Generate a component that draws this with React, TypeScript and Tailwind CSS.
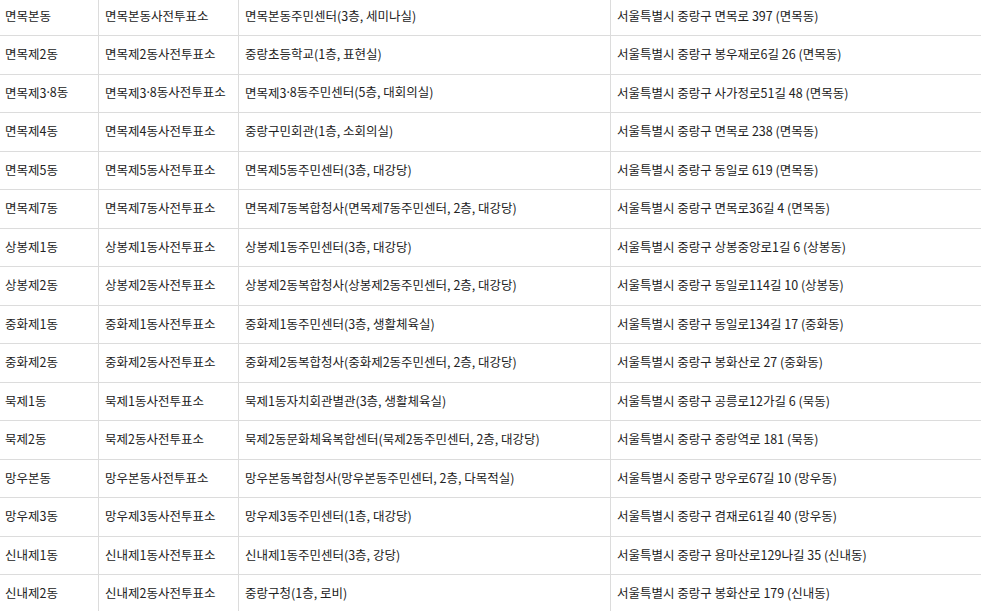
const ROWS: [string, string, string, string][] = [
  ["면목본동", "면목본동사전투표소", "면목본동주민센터(3층, 세미나실)", "서울특별시 중랑구 면목로 397 (면목동)"],
  ["면목제2동", "면목제2동사전투표소", "중랑초등학교(1층, 표현실)", "서울특별시 중랑구 봉우재로6길 26 (면목동)"],
  ["면목제3·8동", "면목제3·8동사전투표소", "면목제3·8동주민센터(5층, 대회의실)", "서울특별시 중랑구 사가정로51길 48 (면목동)"],
  ["면목제4동", "면목제4동사전투표소", "중랑구민회관(1층, 소회의실)", "서울특별시 중랑구 면목로 238 (면목동)"],
  ["면목제5동", "면목제5동사전투표소", "면목제5동주민센터(3층, 대강당)", "서울특별시 중랑구 동일로 619 (면목동)"],
  ["면목제7동", "면목제7동사전투표소", "면목제7동복합청사(면목제7동주민센터, 2층, 대강당)", "서울특별시 중랑구 면목로36길 4 (면목동)"],
  ["상봉제1동", "상봉제1동사전투표소", "상봉제1동주민센터(3층, 대강당)", "서울특별시 중랑구 상봉중앙로1길 6 (상봉동)"],
  ["상봉제2동", "상봉제2동사전투표소", "상봉제2동복합청사(상봉제2동주민센터, 2층, 대강당)", "서울특별시 중랑구 동일로114길 10 (상봉동)"],
  ["중화제1동", "중화제1동사전투표소", "중화제1동주민센터(3층, 생활체육실)", "서울특별시 중랑구 동일로134길 17 (중화동)"],
  ["중화제2동", "중화제2동사전투표소", "중화제2동복합청사(중화제2동주민센터, 2층, 대강당)", "서울특별시 중랑구 봉화산로 27 (중화동)"],
  ["묵제1동", "묵제1동사전투표소", "묵제1동자치회관별관(3층, 생활체육실)", "서울특별시 중랑구 공릉로12가길 6 (묵동)"],
  ["묵제2동", "묵제2동사전투표소", "묵제2동문화체육복합센터(묵제2동주민센터, 2층, 대강당)", "서울특별시 중랑구 중랑역로 181 (묵동)"],
  ["망우본동", "망우본동사전투표소", "망우본동복합청사(망우본동주민센터, 2층, 다목적실)", "서울특별시 중랑구 망우로67길 10 (망우동)"],
  ["망우제3동", "망우제3동사전투표소", "망우제3동주민센터(1층, 대강당)", "서울특별시 중랑구 겸재로61길 40 (망우동)"],
  ["신내제1동", "신내제1동사전투표소", "신내제1동주민센터(3층, 강당)", "서울특별시 중랑구 용마산로129나길 35 (신내동)"],
  ["신내제2동", "신내제2동사전투표소", "중랑구청(1층, 로비)", "서울특별시 중랑구 봉화산로 179 (신내동)"],
];

// the middle dot in "3·8" is narrow in the original, take it from a latin font
function Cell({ text }: { text: string }) {
  const parts = text.split("·");
  return (
    <>
      {parts.map((p, i) => (
        <span key={i}>
          {i > 0 && <span style={{ fontFamily: '"Noto Sans", sans-serif' }}>·</span>}
          {p}
        </span>
      ))}
    </>
  );
}

export default function App() {
  return (
    <div className="h-[611px] overflow-hidden bg-white">
      <div
        className="-mt-[2.5px] text-[12.5px] text-[#222]"
        style={{ fontFamily: '"Noto Sans CJK KR", "Noto Sans", sans-serif' }}
      >
        {ROWS.map((r, i) => (
          <div
            key={i}
            className="grid h-[38.5px] grid-cols-[99px_140px_372px_1fr] border-b border-[#dcdcdc]"
          >
            <div className="flex items-center border-r border-[#dcdcdc] pl-[5px]"><Cell text={r[0]} /></div>
            <div className="flex items-center border-r border-[#dcdcdc] pl-[6px]"><Cell text={r[1]} /></div>
            <div className="flex items-center border-r border-[#dcdcdc] pl-[6px]"><Cell text={r[2]} /></div>
            <div className="flex items-center pl-[6px]"><Cell text={r[3]} /></div>
          </div>
        ))}
      </div>
    </div>
  );
}
